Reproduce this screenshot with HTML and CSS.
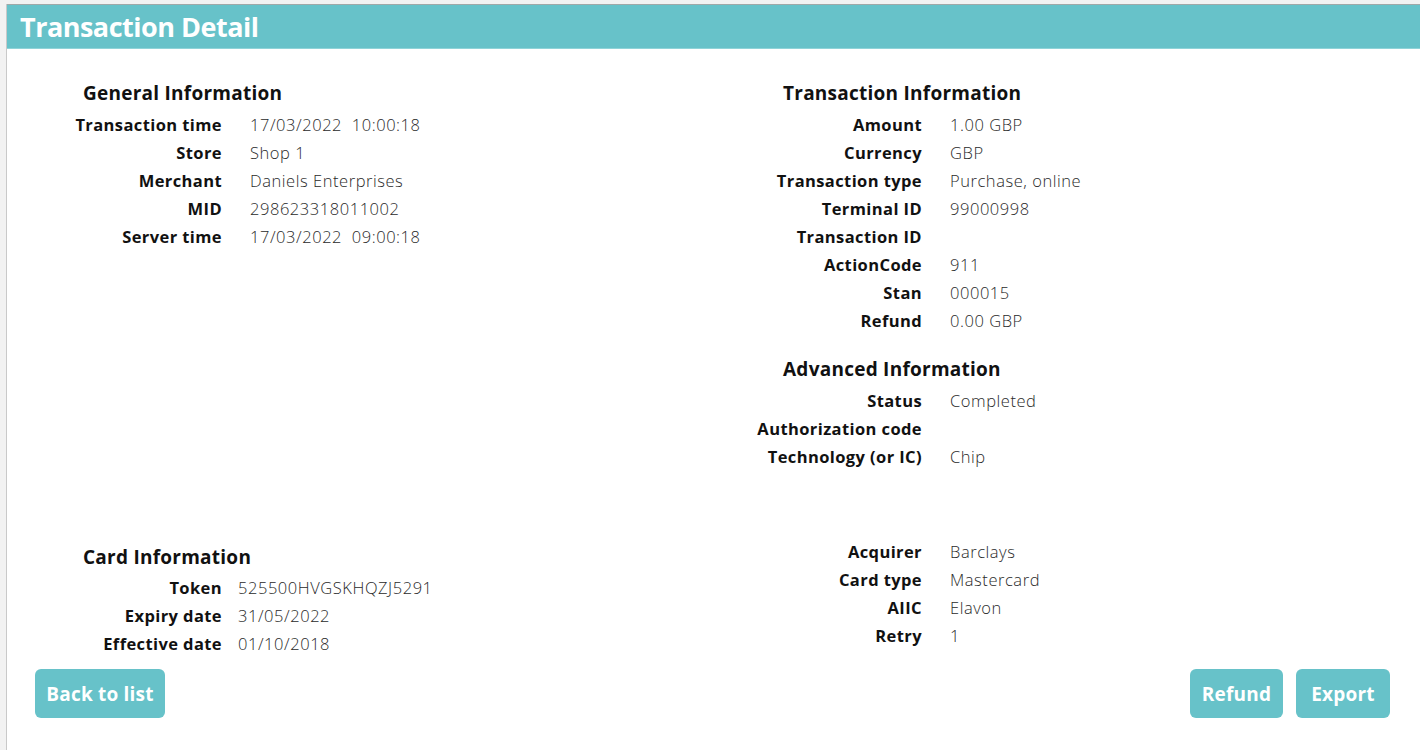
FILE: index.html
```html
<!DOCTYPE html>
<html lang="en">
<head>
<meta charset="utf-8">
<title>Transaction Detail</title>
<link rel="stylesheet" href="styles.css">
</head>
<body>
<div class="frame">
  <header class="header"><h1 class="title">Transaction Detail</h1></header>
  <main class="content">
    <div class="cols">
      <section class="col col-left">
        <h2 class="heading heading-left">General Information</h2>
        <dl class="rows rows-left">
          <dt>Transaction time</dt><dd>17/03/2022&nbsp; 10:00:18</dd>
          <dt>Store</dt><dd>Shop 1</dd>
          <dt>Merchant</dt><dd>Daniels Enterprises</dd>
          <dt>MID</dt><dd>298623318011002</dd>
          <dt>Server time</dt><dd>17/03/2022&nbsp; 09:00:18</dd>
        </dl>
      </section>
      <section class="col col-right">
        <h2 class="heading heading-right">Transaction Information</h2>
        <dl class="rows rows-right">
          <dt>Amount</dt><dd>1.00 GBP</dd>
          <dt>Currency</dt><dd>GBP</dd>
          <dt>Transaction type</dt><dd>Purchase, online</dd>
          <dt>Terminal ID</dt><dd>99000998</dd>
          <dt>Transaction ID</dt><dd></dd>
          <dt>ActionCode</dt><dd>911</dd>
          <dt>Stan</dt><dd>000015</dd>
          <dt>Refund</dt><dd>0.00 GBP</dd>
        </dl>
        <h2 class="heading heading-right heading-adv">Advanced Information</h2>
        <dl class="rows rows-right">
          <dt>Status</dt><dd>Completed</dd>
          <dt>Authorization code</dt><dd></dd>
          <dt>Technology (or IC)</dt><dd>Chip</dd>
        </dl>
      </section>
    </div>
    <div class="cols cols-bottom">
      <section class="col col-left card">
        <h2 class="heading heading-left heading-card">Card Information</h2>
        <dl class="rows rows-card">
          <dt>Token</dt><dd>525500HVGSKHQZJ5291</dd>
          <dt>Expiry date</dt><dd>31/05/2022</dd>
          <dt>Effective date</dt><dd>01/10/2018</dd>
        </dl>
      </section>
      <section class="col col-right">
        <dl class="rows rows-right">
          <dt>Acquirer</dt><dd>Barclays</dd>
          <dt>Card type</dt><dd>Mastercard</dd>
          <dt>AIIC</dt><dd>Elavon</dd>
          <dt>Retry</dt><dd>1</dd>
        </dl>
      </section>
    </div>
  </main>
  <footer class="actions">
    <button class="btn btn-back" type="button">Back to list</button>
    <div class="actions-right">
      <button class="btn btn-refund" type="button">Refund</button>
      <button class="btn btn-export" type="button">Export</button>
    </div>
  </footer>
</div>
</body>
</html>
```

FILE: styles.css
```css
* { box-sizing: border-box; }

html, body {
  margin: 0;
  padding: 0;
  height: 100%;
}

body {
  background: #f2f2f2;
  font-family: "Open Sans", Lato, "Liberation Sans", sans-serif;
  color: #111;
  padding: 4px 0 0 6px;
}

.frame {
  background: #ffffff;
  border-left: 1px solid #c9c9c9;
  height: 746px;
  display: flex;
  flex-direction: column;
}

.header {
  background: #67c2c9;
  height: 45px;
  display: flex;
  align-items: center;
  padding-left: 13px;
  border-top: 1px solid #a0a8a8;
  border-bottom: 1px solid #8fd3d8;
}

.title {
  margin: 0;
  color: #ffffff;
  font-size: 27px;
  font-weight: 700;
  line-height: 1;
  letter-spacing: -0.5px;
}

.content {
  padding: 30px 0 0 59px;
}

.cols {
  display: flex;
}

.col-left {
  width: 684px;
}

.col-right {
  flex: 1;
}

.heading {
  margin: 0 0 4px 0;
  font-size: 19px;
  font-weight: 700;
  line-height: 28px;
  color: #111;
  letter-spacing: 0.25px;
}

.heading-left { padding-left: 17px; }
.heading-right { padding-left: 33px; }
.heading-adv { margin-top: 20px; }

.rows {
  margin: 0;
  display: grid;
  font-size: 16.5px;
  line-height: 28px;
}

.rows dt {
  font-weight: 700;
  text-align: right;
  color: #111;
  white-space: nowrap;
  letter-spacing: 0.4px;
}

.rows dd {
  margin: 0;
  font-weight: 300;
  color: #2a2a2a;
  min-height: 28px;
  white-space: nowrap;
  letter-spacing: 0.55px;
}

.rows-left {
  grid-template-columns: 156px 1fr;
  column-gap: 28px;
}

.rows-right {
  grid-template-columns: 172px 1fr;
  column-gap: 28px;
}

.rows-card {
  grid-template-columns: 156px 1fr;
  column-gap: 16px;
}

.cols-bottom {
  margin-top: 67px;
}

.card {
  padding-top: 5px;
}

.heading-card { margin-bottom: 3px; }

.actions {
  display: flex;
  justify-content: space-between;
  padding: 11px 30px 0 28px;
}

.actions-right {
  display: flex;
  gap: 13px;
}

.btn {
  background: #67c2c9;
  color: #ffffff;
  border: none;
  border-radius: 6px;
  height: 49px;
  font-family: inherit;
  font-size: 19px;
  font-weight: 700;
  letter-spacing: 0.2px;
  padding: 0 6px;
}

.btn-back { width: 130px; }
.btn-refund { width: 93px; }
.btn-export { width: 94px; }
```
